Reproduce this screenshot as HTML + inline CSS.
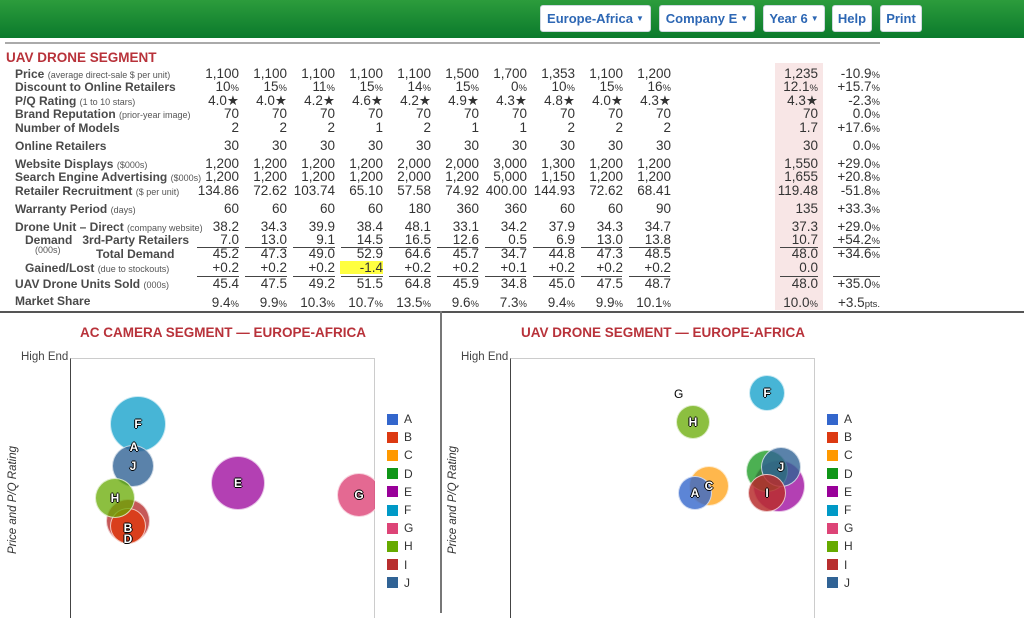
<!DOCTYPE html>
<html><head><meta charset="utf-8"><style>
*{margin:0;padding:0;box-sizing:border-box}
body{width:1024px;height:613px;overflow:hidden;background:#fff;font-family:"Liberation Sans",Arial,sans-serif;color:#333;position:relative}
.hdr{position:absolute;left:0;top:0;width:1024px;height:38px;background:linear-gradient(#2c9c3c,#0b7a2c)}
.btn{position:absolute;top:5px;height:27px;background:#fff;border:1px solid #cfd8e0;border-radius:3px;color:#2d67b4;font-weight:bold;font-size:13px;line-height:25px;text-align:center}
.btn i{font-style:normal;font-size:8px;vertical-align:2px;margin-left:3px}
.topline{position:absolute;left:5px;top:42px;width:875px;height:2px;background:#aaa}
.ttl{position:absolute;left:6px;top:50px;font-size:13.5px;font-weight:bold;color:#b8323a}
.r{position:absolute;left:0;width:900px;height:14px;font-size:13.5px;line-height:14px}
.l{position:absolute;left:15px;font-weight:bold;color:#4a4a4a;font-size:12px;white-space:nowrap}
.l small{font-weight:normal;font-size:9px;color:#555}
.vs{position:absolute;left:191px;display:flex}
.vs span{width:48px;text-align:right;white-space:nowrap}
.a{position:absolute;left:770px;width:48px;text-align:right}
.c{position:absolute;left:826px;width:54px;text-align:right}
s{text-decoration:none;font-size:9.5px}
.pink{position:absolute;left:775px;top:63px;width:48px;height:247px;background:#f8e6e6}
.ul{position:absolute;height:1px;background:#444}
.div{position:absolute;left:0;top:311px;width:1024px;height:2px;background:#555}
.vdiv{position:absolute;left:440px;top:311px;width:2px;height:302px;background:#777}
.ct{position:absolute;top:325px;font-size:13.5px;font-weight:bold;color:#b8323a;width:440px;text-align:center}
.he{position:absolute;top:351px;font-size:11.5px;color:#444}
.box{position:absolute;top:358px;width:305px;height:260px;border-left:1px solid #444;border-top:1px solid #ccc;border-right:1px solid #ccc}
.yl{position:absolute;top:494px;font-size:11.5px;font-style:italic;color:#333;transform:rotate(-90deg);transform-origin:center;white-space:nowrap;width:120px;text-align:center}
.lg{position:absolute;font-size:12px;color:#333}
.lg div{height:18.2px;display:flex;align-items:center}
.lg b{display:inline-block;width:11px;height:11px;margin-right:6px}
.bb{position:absolute;border-radius:50%;border:1px solid rgba(255,255,255,.7)}
.lb{position:absolute;font-size:12px;font-weight:bold;color:#fff;text-shadow:-1px 0 #000,1px 0 #000,0 1px #000,0 -1px #000;transform:translate(-50%,-50%)}
</style></head><body>
<div class="hdr"></div>
<div class="btn" style="left:540px;width:111px">Europe-Africa<i>▼</i></div>
<div class="btn" style="left:659px;width:96px">Company E<i>▼</i></div>
<div class="btn" style="left:763px;width:62px">Year 6<i>▼</i></div>
<div class="btn" style="left:832px;width:40px">Help</div>
<div class="btn" style="left:880px;width:42px">Print</div>
<div class="topline"></div>
<div class="pink"></div>
<div class="ttl">UAV DRONE SEGMENT</div>

<div class="r" style="top:67px"><div class="l">Price <small>(average direct-sale $ per unit)</small></div><div class="vs"><span>1,100</span><span>1,100</span><span>1,100</span><span>1,100</span><span>1,100</span><span>1,500</span><span>1,700</span><span>1,353</span><span>1,100</span><span>1,200</span></div><div class="a">1,235</div><div class="c">-10.9<s>%</s></div></div>
<div class="r" style="top:80px"><div class="l">Discount to Online Retailers</div><div class="vs"><span>10<s>%</s></span><span>15<s>%</s></span><span>11<s>%</s></span><span>15<s>%</s></span><span>14<s>%</s></span><span>15<s>%</s></span><span>0<s>%</s></span><span>10<s>%</s></span><span>15<s>%</s></span><span>16<s>%</s></span></div><div class="a">12.1<s>%</s></div><div class="c">+15.7<s>%</s></div></div>
<div class="r" style="top:94px"><div class="l">P/Q Rating <small>(1 to 10 stars)</small></div><div class="vs"><span>4.0★</span><span>4.0★</span><span>4.2★</span><span>4.6★</span><span>4.2★</span><span>4.9★</span><span>4.3★</span><span>4.8★</span><span>4.0★</span><span>4.3★</span></div><div class="a">4.3★</div><div class="c">-2.3<s>%</s></div></div>
<div class="r" style="top:107px"><div class="l">Brand Reputation <small>(prior-year image)</small></div><div class="vs"><span>70</span><span>70</span><span>70</span><span>70</span><span>70</span><span>70</span><span>70</span><span>70</span><span>70</span><span>70</span></div><div class="a">70</div><div class="c">0.0<s>%</s></div></div>
<div class="r" style="top:121px"><div class="l">Number of Models</div><div class="vs"><span>2</span><span>2</span><span>2</span><span>1</span><span>2</span><span>1</span><span>1</span><span>2</span><span>2</span><span>2</span></div><div class="a">1.7</div><div class="c">+17.6<s>%</s></div></div>
<div class="r" style="top:139px"><div class="l">Online Retailers</div><div class="vs"><span>30</span><span>30</span><span>30</span><span>30</span><span>30</span><span>30</span><span>30</span><span>30</span><span>30</span><span>30</span></div><div class="a">30</div><div class="c">0.0<s>%</s></div></div>
<div class="r" style="top:157px"><div class="l">Website Displays <small>($000s)</small></div><div class="vs"><span>1,200</span><span>1,200</span><span>1,200</span><span>1,200</span><span>2,000</span><span>2,000</span><span>3,000</span><span>1,300</span><span>1,200</span><span>1,200</span></div><div class="a">1,550</div><div class="c">+29.0<s>%</s></div></div>
<div class="r" style="top:170px"><div class="l">Search Engine Advertising <small>($000s)</small></div><div class="vs"><span>1,200</span><span>1,200</span><span>1,200</span><span>1,200</span><span>2,000</span><span>1,200</span><span>5,000</span><span>1,150</span><span>1,200</span><span>1,200</span></div><div class="a">1,655</div><div class="c">+20.8<s>%</s></div></div>
<div class="r" style="top:184px"><div class="l">Retailer Recruitment <small>($ per unit)</small></div><div class="vs"><span>134.86</span><span>72.62</span><span>103.74</span><span>65.10</span><span>57.58</span><span>74.92</span><span>400.00</span><span>144.93</span><span>72.62</span><span>68.41</span></div><div class="a">119.48</div><div class="c">-51.8<s>%</s></div></div>
<div class="r" style="top:202px"><div class="l">Warranty Period <small>(days)</small></div><div class="vs"><span>60</span><span>60</span><span>60</span><span>60</span><span>180</span><span>360</span><span>360</span><span>60</span><span>60</span><span>90</span></div><div class="a">135</div><div class="c">+33.3<s>%</s></div></div>
<div class="r" style="top:220px"><div class="l">Drone Unit – Direct <small>(company website)</small></div><div class="vs"><span>38.2</span><span>34.3</span><span>39.9</span><span>38.4</span><span>48.1</span><span>33.1</span><span>34.2</span><span>37.9</span><span>34.3</span><span>34.7</span></div><div class="a">37.3</div><div class="c">+29.0<s>%</s></div></div>
<div class="r" style="top:233px"><div class="l" style="left:25px">Demand &nbsp;&nbsp;3rd-Party Retailers</div><div class="vs"><span>7.0</span><span>13.0</span><span>9.1</span><span>14.5</span><span>16.5</span><span>12.6</span><span>0.5</span><span>6.9</span><span>13.0</span><span>13.8</span></div><div class="a">10.7</div><div class="c">+54.2<s>%</s></div></div>
<div style="position:absolute;left:35px;top:245px;font-size:9px;color:#555">(000s)</div>
<div class="r" style="top:247px"><div class="l" style="left:96px">Total Demand</div><div class="vs"><span>45.2</span><span>47.3</span><span>49.0</span><span>52.9</span><span>64.6</span><span>45.7</span><span>34.7</span><span>44.8</span><span>47.3</span><span>48.5</span></div><div class="a">48.0</div><div class="c">+34.6<s>%</s></div></div>
<div style="position:absolute;left:340px;top:261px;width:43px;height:13px;background:#ffff40"></div>
<div class="r" style="top:261px"><div class="l" style="left:25px">Gained/Lost <small>(due to stockouts)</small></div><div class="vs"><span>+0.2</span><span>+0.2</span><span>+0.2</span><span>-1.4</span><span>+0.2</span><span>+0.2</span><span>+0.1</span><span>+0.2</span><span>+0.2</span><span>+0.2</span></div><div class="a">0.0</div><div class="c"></div></div>
<div class="r" style="top:277px"><div class="l">UAV Drone Units Sold <small>(000s)</small></div><div class="vs"><span>45.4</span><span>47.5</span><span>49.2</span><span>51.5</span><span>64.8</span><span>45.9</span><span>34.8</span><span>45.0</span><span>47.5</span><span>48.7</span></div><div class="a">48.0</div><div class="c">+35.0<s>%</s></div></div>
<div class="r" style="top:294px"><div class="l">Market Share</div><div class="vs" style="top:2px"><span>9.4<s>%</s></span><span>9.9<s>%</s></span><span>10.3<s>%</s></span><span>10.7<s>%</s></span><span>13.5<s>%</s></span><span>9.6<s>%</s></span><span>7.3<s>%</s></span><span>9.4<s>%</s></span><span>9.9<s>%</s></span><span>10.1<s>%</s></span></div><div class="a" style="top:2px">10.0<s>%</s></div><div class="c" style="top:2px">+3.5<s>pts.</s></div></div>

<div class="ul" style="left:197px;top:247px;width:42px"></div><div class="ul" style="left:245px;top:247px;width:42px"></div><div class="ul" style="left:293px;top:247px;width:42px"></div><div class="ul" style="left:341px;top:247px;width:42px"></div><div class="ul" style="left:389px;top:247px;width:42px"></div><div class="ul" style="left:437px;top:247px;width:41px"></div><div class="ul" style="left:485px;top:247px;width:41px"></div><div class="ul" style="left:533px;top:247px;width:41px"></div><div class="ul" style="left:581px;top:247px;width:41px"></div><div class="ul" style="left:629px;top:247px;width:41px"></div><div class="ul" style="left:780px;top:247px;width:38px"></div><div class="ul" style="left:833px;top:247px;width:47px"></div>
<div class="ul" style="left:197px;top:276px;width:42px"></div><div class="ul" style="left:245px;top:276px;width:42px"></div><div class="ul" style="left:293px;top:276px;width:42px"></div><div class="ul" style="left:341px;top:276px;width:42px"></div><div class="ul" style="left:389px;top:276px;width:42px"></div><div class="ul" style="left:437px;top:276px;width:41px"></div><div class="ul" style="left:485px;top:276px;width:41px"></div><div class="ul" style="left:533px;top:276px;width:41px"></div><div class="ul" style="left:581px;top:276px;width:41px"></div><div class="ul" style="left:629px;top:276px;width:41px"></div><div class="ul" style="left:780px;top:276px;width:38px"></div><div class="ul" style="left:833px;top:276px;width:47px"></div>

<div class="div"></div><div class="vdiv"></div>
<div class="ct" style="left:3px">AC CAMERA SEGMENT — EUROPE-AFRICA</div>
<div class="ct" style="left:443px">UAV DRONE SEGMENT — EUROPE-AFRICA</div>
<div class="he" style="left:21px">High End</div><div class="he" style="left:461px">High End</div>
<div class="box" style="left:70px"></div><div class="box" style="left:510px"></div>
<div class="yl" style="left:-47px">Price and P/Q Rating</div>
<div class="yl" style="left:393px">Price and P/Q Rating</div>

<div class="lg" style="left:387px;top:410px"><div><b style="background:#3366cc"></b>A</div><div><b style="background:#dc3912"></b>B</div><div><b style="background:#ff9900"></b>C</div><div><b style="background:#109618"></b>D</div><div><b style="background:#990099"></b>E</div><div><b style="background:#0099c6"></b>F</div><div><b style="background:#dd4477"></b>G</div><div><b style="background:#66aa00"></b>H</div><div><b style="background:#b82e2e"></b>I</div><div><b style="background:#316395"></b>J</div></div>
<div class="lg" style="left:827px;top:410px"><div><b style="background:#3366cc"></b>A</div><div><b style="background:#dc3912"></b>B</div><div><b style="background:#ff9900"></b>C</div><div><b style="background:#109618"></b>D</div><div><b style="background:#990099"></b>E</div><div><b style="background:#0099c6"></b>F</div><div><b style="background:#dd4477"></b>G</div><div><b style="background:#66aa00"></b>H</div><div><b style="background:#b82e2e"></b>I</div><div><b style="background:#316395"></b>J</div></div>

<div style="position:absolute;left:71px;top:359px;width:304px;height:254px;overflow:hidden">
<div class="bb" style="left:39px;top:37px;width:56px;height:56px;background:rgba(0,153,198,.72)"></div>
<div class="bb" style="left:41px;top:86px;width:42px;height:42px;background:rgba(49,99,149,.8)"></div>
<div class="bb" style="left:35px;top:140px;width:44px;height:44px;background:rgba(184,46,46,.8)"></div>
<div class="bb" style="left:39px;top:149px;width:36px;height:36px;background:rgba(220,57,18,.85)"></div>
<div class="bb" style="left:24px;top:119px;width:40px;height:40px;background:rgba(102,170,0,.75)"></div>
<div class="bb" style="left:140px;top:97px;width:54px;height:54px;background:rgba(153,0,153,.75)"></div>
<div class="bb" style="left:266px;top:114px;width:44px;height:44px;background:rgba(221,68,119,.8)"></div>
</div>
<div class="lb" style="left:138px;top:424px">F</div>
<div class="lb" style="left:134px;top:447px">A</div>
<div class="lb" style="left:133px;top:466px">J</div>
<div class="lb" style="left:115px;top:498px">H</div>
<div class="lb" style="left:128px;top:528px">B</div>
<div class="lb" style="left:128px;top:539px">D</div>
<div class="lb" style="left:238px;top:483px">E</div>
<div class="lb" style="left:359px;top:495px">G</div>

<div class="bb" style="left:749px;top:375px;width:36px;height:36px;background:rgba(0,153,198,.72)"></div>
<div class="bb" style="left:676px;top:405px;width:34px;height:34px;background:rgba(102,170,0,.75)"></div>
<div class="bb" style="left:689px;top:466px;width:40px;height:40px;background:rgba(255,153,0,.7)"></div>
<div class="bb" style="left:678px;top:476px;width:34px;height:34px;background:rgba(51,102,204,.8)"></div>
<div class="bb" style="left:753px;top:460px;width:52px;height:52px;background:rgba(153,0,153,.75)"></div>
<div class="bb" style="left:746px;top:450px;width:42px;height:42px;background:rgba(16,150,24,.75)"></div>
<div class="bb" style="left:761px;top:447px;width:40px;height:40px;background:rgba(49,99,149,.8)"></div>
<div class="bb" style="left:748px;top:474px;width:38px;height:38px;background:rgba(184,46,46,.85)"></div>
<div style="position:absolute;left:674px;top:387px;font-size:12px;color:#000">G</div>
<div class="lb" style="left:767px;top:393px">F</div>
<div class="lb" style="left:693px;top:422px">H</div>
<div class="lb" style="left:709px;top:486px">C</div>
<div class="lb" style="left:695px;top:493px">A</div>
<div class="lb" style="left:781px;top:467px">J</div>
<div class="lb" style="left:767px;top:493px">I</div>
</body></html>
